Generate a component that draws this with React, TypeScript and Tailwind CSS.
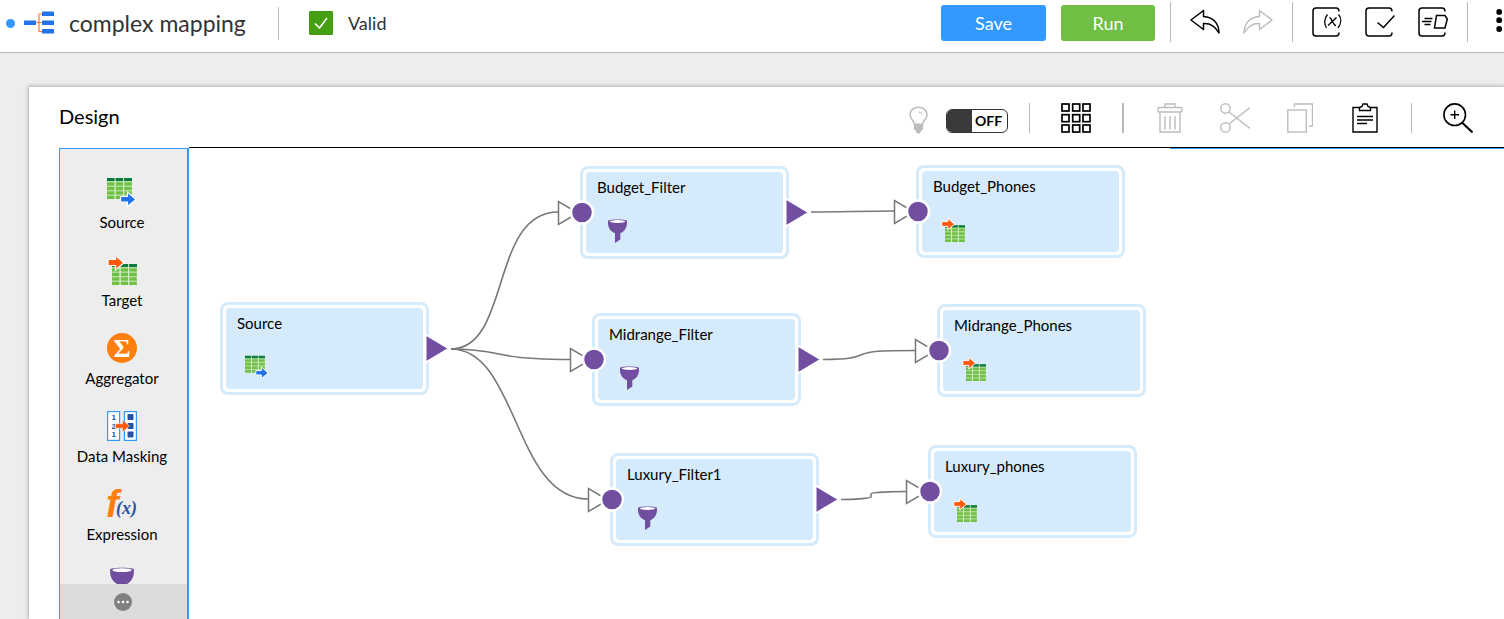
import type { ReactNode } from "react";

function Divider({ className = "w-px" }: { className?: string }) {
  return <span aria-hidden="true" className={`block shrink-0 bg-[#b9b9b9] ${className}`} />;
}

function IconButton({ label, className = "", children }: { label: string; className?: string; children: ReactNode }) {
  return (
    <button type="button" aria-label={label} className={`flex shrink-0 items-center justify-center ${className}`}>
      {children}
    </button>
  );
}

function MappingLogo() {
  return (
    <svg width="30" height="24" viewBox="0 0 30 24" fill="none" aria-hidden="true">
      <path d="M12 11.500h7M19 3h-4v17.500h4" stroke="#ff7a45" strokeWidth="1.200" />
      <g fill="#2272e8">
        <rect x="0" y="9.500" width="12" height="4.500" rx="0.5" />
        <rect x="18" y="0.500" width="12" height="4.500" rx="0.5" />
        <rect x="18" y="9.500" width="12" height="4.500" rx="0.5" />
        <rect x="18" y="18" width="12" height="4.500" rx="0.5" />
      </g>
    </svg>
  );
}

function TableGrid({ x, y }: { x: number; y: number }) {
  return (
    <g transform={`translate(${x} ${y})`}>
      <rect width="25" height="21" fill="#b5dfa0" />
      <rect width="25" height="3" fill="#0b7a3f" />
      {[0, 8.7, 17.2].map((cx) =>
        [4.4, 8.9, 13.4, 17.9].map((cy) => (
          <rect key={`${cx}-${cy}`} x={cx} y={cy} width="7.500" height="3.100" fill="#6fc045" />
        )),
      )}
      <path d="M8.100 0v21M16.600 0v21" stroke="#d8efcd" strokeWidth="1" />
    </g>
  );
}

function SourceIcon({ size = 30 }: { size?: number }) {
  return (
    <svg width={size} height={size} viewBox="0 0 30 30" aria-hidden="true">
      <TableGrid x={0} y={1} />
      <path d="M13.500 19.500h7v-4.500l8.500 7.500-8.500 7v-4.500h-7z" fill="#2272e8" stroke="#fff" strokeWidth="1.200" />
    </svg>
  );
}

function TargetIcon({ size = 30 }: { size?: number }) {
  return (
    <svg width={size} height={size} viewBox="0 0 30 30" aria-hidden="true">
      <TableGrid x={5} y={9} />
      <path d="M1 4.500h7.500v-4l8.500 7.200-8.500 7.300v-4.500h-7.500z" fill="#ff5a0a" stroke="#fff" strokeWidth="1.200" />
    </svg>
  );
}

function AggregatorIcon() {
  return (
    <svg width="30" height="30" viewBox="0 0 30 30" aria-hidden="true">
      <circle cx="15" cy="15" r="15" fill="#ff7f0e" />
      <text x="15" y="23.500" textAnchor="middle" fontSize="26" fontWeight="700" fill="#fff" className="font-['Liberation_Serif',serif]">
        Σ
      </text>
    </svg>
  );
}

function MaskingIcon() {
  return (
    <svg width="30" height="30" viewBox="0 0 30 30" aria-hidden="true">
      <rect x="0.600" y="0.600" width="12" height="28.800" fill="#fff" stroke="#3399ff" strokeWidth="1.200" />
      <rect x="17.400" y="0.600" width="12" height="28.800" fill="#fff" stroke="#3399ff" strokeWidth="1.200" />
      <g fontSize="8" fontWeight="700" fill="#2451a4" className="font-['Liberation_Sans',sans-serif]">
        <text x="4.500" y="9">1</text>
        <text x="4.500" y="17.500">2</text>
        <text x="4.500" y="26">1</text>
      </g>
      <g fill="#2451a4">
        <rect x="20.500" y="3" width="6" height="6" rx="0.8" />
        <rect x="20.500" y="12" width="6" height="6" rx="0.8" />
        <rect x="20.500" y="20.500" width="6" height="6" rx="0.8" />
      </g>
      <path d="M8.500 12.700h7v-4l7 6.300-7 6.300v-4h-7z" fill="#ff5a0a" stroke="#fff" strokeWidth="0.500" />
    </svg>
  );
}

function ExpressionIcon() {
  return (
    <svg width="30" height="30" viewBox="0 0 30 30" className="overflow-visible" aria-hidden="true">
      <text x="-1" y="28" fontSize="38" fontWeight="700" fontStyle="italic" fill="#ff7f0e" className="font-['Liberation_Sans',sans-serif]">
        f
      </text>
      <text x="9" y="25" fontSize="18" fontWeight="700" fontStyle="italic" fill="#2451a4" className="font-['Liberation_Serif',serif]">
        (x)
      </text>
    </svg>
  );
}

function FunnelIcon({ width = 19, height = 24 }: { width?: number; height?: number }) {
  return (
    <svg width={width} height={height} viewBox="0 0 19 24" aria-hidden="true">
      <path d="M0 1.800C2 .2 17 .2 19 1.800v2.200c0 4.500-2.500 8.500-6.700 10.200v6.300L7 24v-9.800C2.500 12.500 0 8.500 0 4z" fill="#714e9f" />
      <ellipse cx="9.500" cy="2.500" rx="7.700" ry="1.500" fill="#fff" />
    </svg>
  );
}

const palette: { label: string; icon: ReactNode }[] = [
  { label: "Source", icon: <SourceIcon /> },
  { label: "Target", icon: <TargetIcon /> },
  { label: "Aggregator", icon: <AggregatorIcon /> },
  { label: "Data Masking", icon: <MaskingIcon /> },
  { label: "Expression", icon: <ExpressionIcon /> },
];

type NodeKind = "source" | "filter" | "target";
const nodes: { label: string; kind: NodeKind; x: number; y: number }[] = [
  { label: "Source", kind: "source", x: 31, y: 154 },
  { label: "Budget_Filter", kind: "filter", x: 391, y: 18 },
  { label: "Midrange_Filter", kind: "filter", x: 403, y: 165 },
  { label: "Luxury_Filter1", kind: "filter", x: 421, y: 305 },
  { label: "Budget_Phones", kind: "target", x: 727, y: 17 },
  { label: "Midrange_Phones", kind: "target", x: 748, y: 156 },
  { label: "Luxury_phones", kind: "target", x: 739, y: 297 },
];

const wires = [
  "M262 201C322 201 301 64 369 64",
  "M262 201C285 201 298 203.500 310 206C325 209.500 345 211.500 381 211.500",
  "M262 201C329 201 325 351 399 351",
  "M622 64C650 64 675 63 705 63",
  "M634 211.500C662 211.500 667 209 673 206.500C681 203 690 202.500 726 202.500",
  "M652 351.500C668 351.500 682 350 682 349V346C682 344.500 700 343.500 717 343.500",
];

function NodeCard({ label, kind, x, y }: { label: string; kind: NodeKind; x: number; y: number }) {
  return (
    <div className="absolute h-[93px] w-[209px] rounded-lg border-[3px] border-[#d5eafb] bg-white p-[3px]" style={{ left: x, top: y }}>
      <div className="flex h-full flex-col items-start rounded bg-[#d5eafb] px-[11px] pt-[5px]">
        <span className="text-[15px] leading-5 text-black">{label}</span>
        <span className="ml-2 mt-[22px] flex size-6 items-center justify-center">
          {kind === "source" && <SourceIcon size={24} />}
          {kind === "target" && <TargetIcon size={24} />}
          {kind === "filter" && <FunnelIcon />}
        </span>
      </div>
    </div>
  );
}

function Canvas() {
  return (
    <div className="relative min-w-0 flex-1 overflow-hidden border-t border-black bg-white">
      <div className="ml-auto h-px w-[334px] bg-[#3399ff]" />
      {nodes.map((n) => (
        <NodeCard key={n.label} {...n} />
      ))}
      <svg className="pointer-events-none absolute inset-0 h-full w-full" fill="none" aria-hidden="true">
        <g stroke="#777" strokeWidth="1.600">
          {wires.map((d) => (
            <path key={d} d={d} />
          ))}
        </g>
        {nodes.map((n) => (
          <g key={n.label} transform={`translate(${n.x} ${n.y})`}>
            {n.kind !== "source" && (
              <>
                <path d="M-21.500 35.500V58.500L-2 47z" fill="#fff" stroke="#777" strokeWidth="1.500" />
                <circle cx="2" cy="46.500" r="11" fill="#714e9f" stroke="#fff" strokeWidth="2.500" />
              </>
            )}
            {n.kind !== "target" && <path d="M205.500 32.500V60.500L229 46.500z" fill="#714e9f" stroke="#fff" strokeWidth="2" />}
          </g>
        ))}
      </svg>
    </div>
  );
}

function Header() {
  return (
    <header className="flex h-[53px] shrink-0 items-center border-b border-[#b9b9b9] bg-white pb-1.5 pl-1.5">
      <span className="size-[9px] shrink-0 rounded-full bg-[#3399ff]" />
      <span className="ml-[9px] shrink-0">
        <MappingLogo />
      </span>
      <h1 className="ml-[15px] w-[180px] shrink-0 whitespace-nowrap text-[23px] leading-8 text-[#333]">complex mapping</h1>
      <Divider className="ml-[29px] h-[33px] w-px" />
      <span className="ml-[30px] flex size-6 shrink-0 items-center justify-center rounded-[1px] bg-[#459f12]">
        <svg width="14" height="12" viewBox="0 0 14 12" fill="none" stroke="#fff" strokeWidth="1.600" aria-hidden="true">
          <path d="M1 6.500l4.500 4.500L13 1" />
        </svg>
      </span>
      <span className="ml-[15px] text-lg leading-6 text-[#333]">Valid</span>

      <div className="ml-auto flex shrink-0 items-center">
        <button type="button" className="h-9 w-[105px] rounded-[3px] bg-[#3399ff] text-lg leading-6 text-white">
          Save
        </button>
        <button type="button" className="ml-[15px] h-9 w-[94px] rounded-[3px] bg-[#70bf44] text-lg leading-6 text-white">
          Run
        </button>
        <div className="ml-[15px] flex items-center pb-0.5">
          <Divider className="h-10 w-px" />
          <IconButton label="Undo" className="ml-[19px]">
            <svg width="30" height="26" viewBox="0 0 30 26" fill="none" stroke="#000" strokeWidth="1.500" strokeLinejoin="round">
              <path d="M1 11L13.500 1.500v6C23 8 29 14 29 24C25 17 20 14 13.500 14.500V20.500z" />
            </svg>
          </IconButton>
          <IconButton label="Redo" className="ml-[23px]">
            <svg width="30" height="26" viewBox="0 0 30 26" fill="none" stroke="#bdbdbd" strokeWidth="1.500" strokeLinejoin="round">
              <path d="M29 11L16.500 1.500v6C7 8 1 14 1 24C5 17 10 14 16.500 14.500V20.500z" />
            </svg>
          </IconButton>
          <Divider className="ml-[19px] h-10 w-px" />
          <IconButton label="Parameters" className="ml-[19px]">
            <svg width="30" height="30" viewBox="0 0 30 30" fill="none" stroke="#000" strokeWidth="1.500">
              <path d="M27 4.500C27 2 26 1 24 1H4C2 1 1 2 1 4v22c0 2 1 3 3 3h20c2 0 3-1 3-3.500" />
              <path d="M15.500 7.500c-3.500 4-3.500 9.500-1 13.500M26.500 7.500c3.500 4 2.500 9.500-.5 13.500M24.500 10.500L16 18.500M17.500 10.500c2 0 3.500 8 6.500 8" strokeWidth="1.300" />
            </svg>
          </IconButton>
          <IconButton label="Validate" className="ml-[23px]">
            <svg width="30" height="30" viewBox="0 0 30 30" fill="none" stroke="#000" strokeWidth="1.500">
              <path d="M27 4.500C27 2 26 1 24 1H4C2 1 1 2 1 4v22c0 2 1 3 3 3h20c2 0 3-1 3-3.500" />
              <path d="M12.500 15.500l6 5L29.500 8.500" />
            </svg>
          </IconButton>
          <IconButton label="Preview" className="ml-[23px]">
            <svg width="30" height="30" viewBox="0 0 30 30" fill="none" stroke="#000" strokeWidth="1.500">
              <path d="M27 4.500C27 2 26 1 24 1H4C2 1 1 2 1 4v22c0 2 1 3 3 3h20c2 0 3-1 3-3.500" />
              <path d="M18.500 8.500H27l2.300 3.500L27 21H16.500z" />
              <path d="M6.500 11.500h8M4 14.500h9.500M6.500 17.500h6" strokeWidth="1.300" />
            </svg>
          </IconButton>
          <Divider className="ml-[19px] h-10 w-px" />
          <IconButton label="More actions" className="ml-7">
            <svg width="8" height="26" viewBox="0 0 8 26" fill="#000">
              <circle cx="3.200" cy="2.900" r="2.900" />
              <circle cx="3.200" cy="11.200" r="2.900" />
              <circle cx="3.200" cy="20" r="2.900" />
            </svg>
          </IconButton>
        </div>
      </div>
    </header>
  );
}

function Toolbar() {
  return (
    <div className="flex h-[60px] shrink-0 items-center pl-[30px] pr-[31px] pt-0.5">
      <h2 className="pb-1 text-xl leading-6 text-black">Design</h2>
      <div className="ml-auto flex shrink-0 items-center">
        <svg width="19" height="28" viewBox="0 0 19 28" fill="none" stroke="#bdbdbd" strokeWidth="1.600" className="mt-1" aria-hidden="true">
          <path d="M5.500 19c0-5-4.500-5.500-4.500-10.200C1 4.500 4.500 1.200 9.500 1.200S18 4.500 18 8.800C18 13.500 13.500 14 13.500 19z" />
          <path d="M9.500 6c2.200 0 3.500 1 3.500 3" strokeWidth="1" />
          <path d="M5 17.500h9v6l-2 1.500-1 2.500H8L7 25l-2-1.500z" fill="#bdbdbd" stroke="none" />
        </svg>
        <button
          type="button"
          role="switch"
          aria-checked="false"
          aria-label="Recommendations"
          className="ml-[18px] mt-1.5 flex h-6 w-[62px] items-center overflow-hidden rounded-md border border-[#333] bg-white"
        >
          <span className="h-full w-[25px] bg-[#3a3a3a]" />
          <span className="flex-1 pr-0.5 text-center text-sm font-bold leading-5 text-black">OFF</span>
        </button>
        <Divider className="ml-[21px] h-[30px] w-px" />
        <IconButton label="Arrange all" className="ml-[31px]">
          <svg width="30" height="30" viewBox="0 0 30 30" fill="none" stroke="#000" strokeWidth="1.700">
            {[1, 11.7, 22].map((x) => [1, 11.7, 22].map((y) => <rect key={`${x}-${y}`} x={x} y={y} width="7" height="7" />))}
          </svg>
        </IconButton>
        <Divider className="ml-[31px] h-[30px] w-0.5" />
        <IconButton label="Delete" className="ml-[33px]">
          <svg width="26" height="30" viewBox="0 0 26 30" fill="none" stroke="#bdbdbd" strokeWidth="1.400">
            <rect x="1" y="4.500" width="24" height="4.500" rx="1" />
            <path d="M8 4V1h10v3M3 9.500V29h20V9.500M8 13v13.500M13 13v13.500M18 13v13.500" />
          </svg>
        </IconButton>
        <IconButton label="Cut" className="ml-[37px]">
          <svg width="30" height="30" viewBox="0 0 30 30" fill="none" stroke="#bdbdbd" strokeWidth="1.500">
            <circle cx="5.500" cy="5.500" r="4.700" />
            <circle cx="5.500" cy="24.500" r="4.700" />
            <path d="M9 9L30 25.500M9 21L30 4.500" />
          </svg>
        </IconButton>
        <IconButton label="Copy" className="ml-[37px]">
          <svg width="26" height="30" viewBox="0 0 26 30" fill="none" stroke="#bdbdbd" strokeWidth="1.400">
            <rect x="0.800" y="7" width="18.500" height="22" />
            <path d="M7.500 4V1h18v22h-3.500" />
          </svg>
        </IconButton>
        <IconButton label="Paste" className="ml-[39px]">
          <svg width="26" height="30" viewBox="0 0 26 30" fill="none" stroke="#000" strokeWidth="1.400">
            <path d="M7 4.500H1V29h24V4.500h-6" />
            <path d="M7.500 7.500V4.500L10 3.500 11 1h4l1 2.500 2.500 1v3z" />
            <path d="M5 13.500h16M5 17h16M5 20.500h10" />
          </svg>
        </IconButton>
        <Divider className="ml-[33px] h-[30px] w-px" />
        <IconButton label="Zoom in" className="ml-[31px]">
          <svg width="30" height="30" viewBox="0 0 30 30" fill="none" stroke="#000" strokeWidth="1.600">
            <circle cx="11.700" cy="11.700" r="10.800" />
            <path d="M19 19.500L29.500 29.500" strokeWidth="2" />
            <path d="M11.700 7.500v8.500M7.500 11.700h8.500" strokeWidth="1.400" />
          </svg>
        </IconButton>
      </div>
    </div>
  );
}

export default function App() {
  return (
    <div className="flex h-screen flex-col overflow-hidden bg-[#ededed] font-['Lato','Liberation_Sans',sans-serif]">
      <Header />
      <main className="flex min-h-0 flex-1 flex-col pl-[29px] pt-[34px]">
        <section className="flex min-h-0 flex-1 flex-col bg-white shadow-[0_0_4px_1px_rgba(0,0,0,0.25)]">
          <Toolbar />
          <div className="flex min-h-0 flex-1 pl-[30px]">
            <aside className="mt-px flex w-[130px] shrink-0 flex-col border-l border-r-2 border-t border-[#3399ff] bg-[#ededed]">
              <ul className="flex min-h-0 flex-1 flex-col gap-[23px] overflow-hidden pr-[3px] pt-7">
                {palette.map((p) => (
                  <li key={p.label} className="shrink-0">
                    <button type="button" className="flex w-full flex-col items-center gap-[5px]">
                      <span className="flex h-[30px] items-center">{p.icon}</span>
                      <span className="whitespace-nowrap text-[15px] leading-5 text-black">{p.label}</span>
                    </button>
                  </li>
                ))}
                <li className="shrink-0">
                  <IconButton label="Filter" className="w-full">
                    <FunnelIcon width={24} height={30} />
                  </IconButton>
                </li>
              </ul>
              <IconButton label="More transformations" className="h-[35px] w-full bg-[#dcdcdc] pr-px">
                <svg width="18" height="18" viewBox="0 0 18 18">
                  <circle cx="9" cy="9" r="9" fill="#808080" />
                  <g fill="#fff">
                    <circle cx="4.500" cy="9" r="1.300" />
                    <circle cx="9" cy="9" r="1.300" />
                    <circle cx="13.500" cy="9" r="1.300" />
                  </g>
                </svg>
              </IconButton>
            </aside>
            <Canvas />
          </div>
        </section>
      </main>
    </div>
  );
}
